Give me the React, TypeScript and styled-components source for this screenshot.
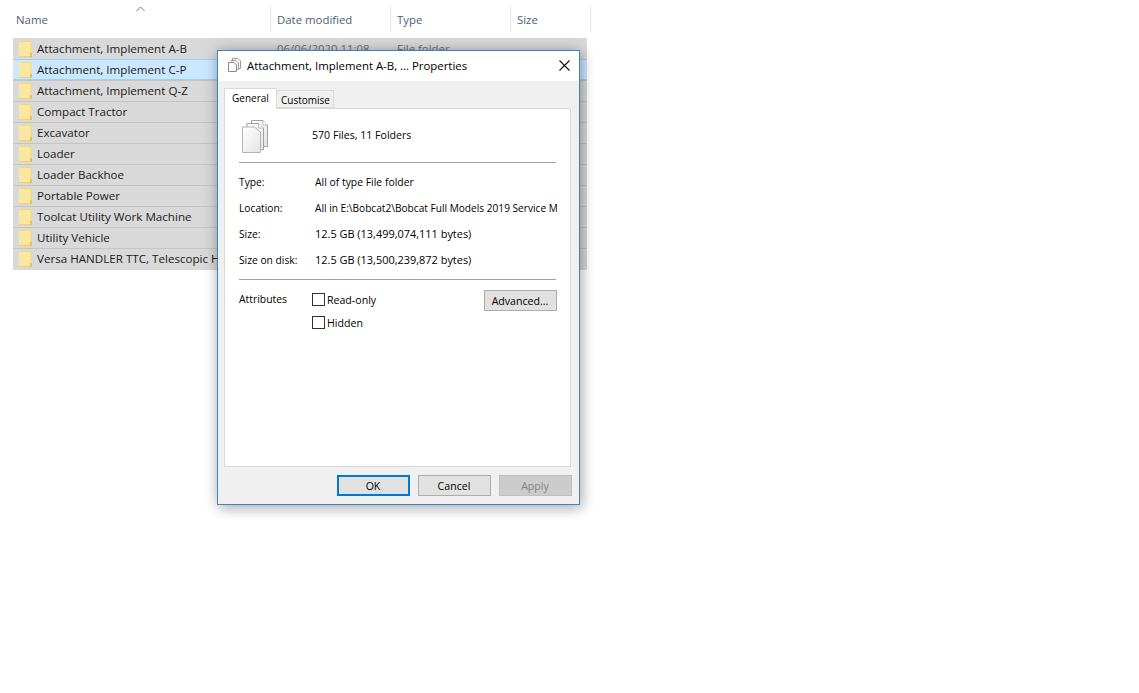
import React, { FC } from 'react';
import styled, { createGlobalStyle } from 'styled-components';

const GlobalStyle = createGlobalStyle`
  html, body {
    margin: 0;
    padding: 0;
    background: #ffffff;
    font-family: "Open Sans", "Noto Sans", sans-serif;
    color: #000000;
  }
  body {
    min-height: 693px;
    overflow: hidden;
  }
`;

const Page = styled.div`
  position: relative;
  width: 1139px;
  height: 693px;
  background: #ffffff;
  overflow: hidden;
`;

const Explorer = styled.div`
  display: flex;
  flex-direction: column;
  padding: 7px 0 0 13px;
`;

const HeaderRow = styled.div`
  display: flex;
  height: 25px;
  margin-bottom: 6px;
`;

const HeaderCell = styled.div<{ $width: number; $indent?: number }>`
  position: relative;
  box-sizing: border-box;
  width: ${(p) => p.$width}px;
  padding-left: ${(p) => p.$indent ?? 6}px;
  border-right: 1px solid #e5e5e5;
  font-size: 11.4px;
  line-height: 25px;
  color: #4c607a;
`;

const SortArrow = styled.svg`
  position: absolute;
  left: 123px;
  top: -1px;
`;

const List = styled.div`
  display: flex;
  flex-direction: column;
  width: 574px;
  padding-bottom: 1px;
  background: #d9d9d9;
`;

const FileRow = styled.div<{ $selected?: boolean }>`
  box-sizing: border-box;
  display: flex;
  align-items: center;
  height: 21px;
  padding-left: 6px;
  background: ${(p) => (p.$selected ? '#cce8ff' : '#d9d9d9')};
  border: 1px solid ${(p) => (p.$selected ? '#99d1ff' : '#d9d9d9')};
  border-width: 1px 0;
  border-top-color: ${(p) => (p.$selected ? '#99d1ff' : '#c4c4c4')};
  &:first-child {
    border-top-color: #d9d9d9;
  }
`;

const FolderIcon = styled.svg`
  flex: none;
  margin-right: 5px;
`;

const NameCell = styled.span`
  flex: none;
  width: 240px;
  font-size: 11.62px;
  line-height: 19px;
  color: #1a1a1a;
  white-space: nowrap;
`;

const MetaCell = styled.span<{ $width: number }>`
  flex: none;
  width: ${(p) => p.$width}px;
  font-size: 11.4px;
  line-height: 19px;
  color: #6d6d6d;
  white-space: nowrap;
`;

const Dialog = styled.div`
  position: absolute;
  left: 217px;
  top: 50px;
  box-sizing: border-box;
  width: 363px;
  height: 455px;
  display: flex;
  flex-direction: column;
  background: #f0f0f0;
  border: 1px solid #3b86bd;
  box-shadow: 0 0 14px rgba(0, 0, 0, 0.24), 3px 5px 12px rgba(0, 0, 0, 0.16);
`;

const TitleBar = styled.div`
  flex: none;
  display: flex;
  align-items: center;
  box-sizing: border-box;
  height: 30px;
  padding: 0 0 2px 10px;
  background: #ffffff;
`;

const TitleText = styled.span`
  flex: 1;
  margin-left: 6px;
  font-size: 11.4px;
  color: #000000;
  white-space: nowrap;
`;

const CloseButton = styled.div`
  flex: none;
  display: flex;
  align-items: center;
  justify-content: center;
  width: 29px;
  height: 28px;
`;

const TabBar = styled.div`
  flex: none;
  display: flex;
  align-items: flex-end;
  height: 27px;
  padding-left: 6px;
`;

const Tab = styled.div<{ $active?: boolean }>`
  position: relative;
  box-sizing: border-box;
  width: ${(p) => (p.$active ? 53 : 57)}px;
  height: ${(p) => (p.$active ? 21 : 18)}px;
  margin-bottom: ${(p) => (p.$active ? -1 : 0)}px;
  padding-left: ${(p) => (p.$active ? 7 : 4)}px;
  background: ${(p) => (p.$active ? '#ffffff' : '#f0f0f0')};
  border: 1px solid #d9d9d9;
  border-bottom: ${(p) => (p.$active ? 'none' : '1px solid #d9d9d9')};
  border-left-width: ${(p) => (p.$active ? 1 : 0)}px;
  font-size: 10px;
  line-height: 18px;
  z-index: ${(p) => (p.$active ? 1 : 0)};
  white-space: nowrap;
`;

const Panel = styled.div`
  flex: none;
  box-sizing: border-box;
  width: 347px;
  height: 359px;
  margin-left: 6px;
  padding: 0 13px 0 14px;
  background: #ffffff;
  border: 1px solid #d9d9d9;
`;

const SummaryRow = styled.div`
  display: flex;
  align-items: center;
  height: 53px;
`;

const SummaryIcon = styled.svg`
  flex: none;
  margin: 2px 0 0 2px;
`;

const SummaryText = styled.span`
  margin-left: 43px;
  margin-top: -1px;
  font-size: 10.6px;
  white-space: nowrap;
`;

const Divider = styled.div`
  height: 1px;
  background: #a0a0a0;
  width: 317px;
`;

const InfoList = styled.div`
  display: flex;
  flex-direction: column;
  height: 116px;
  padding-top: 6px;
  box-sizing: border-box;
`;

const InfoRow = styled.div`
  display: flex;
  align-items: baseline;
  height: 26px;
  line-height: 26px;
  white-space: nowrap;
`;

const InfoLabel = styled.span`
  flex: none;
  width: 76px;
  font-size: 10.25px;
`;

const InfoValue = styled.span<{ $size: number }>`
  display: block;
  width: 243px;
  overflow: hidden;
  font-size: ${(p) => p.$size}px;
`;

const AttributesRow = styled.div`
  display: flex;
  align-items: flex-start;
  padding-top: 10px;
`;

const AttributesLabel = styled.span`
  flex: none;
  width: 73px;
  font-size: 10.4px;
  line-height: 19px;
`;

const CheckGroup = styled.div`
  flex: 1;
  display: flex;
  flex-direction: column;
  gap: 10px;
  padding-top: 3px;
`;

const CheckRow = styled.div`
  display: flex;
  align-items: center;
  height: 13px;
  font-size: 10.6px;
`;

const CheckBox = styled.span`
  flex: none;
  box-sizing: border-box;
  width: 13px;
  height: 13px;
  margin-right: 2px;
  background: #ffffff;
  border: 1px solid #333333;
`;

const Button = styled.div<{ $kind?: 'default' | 'disabled' }>`
  box-sizing: border-box;
  display: flex;
  align-items: center;
  justify-content: center;
  width: 73px;
  height: 21px;
  padding-right: 1px;
  background: ${(p) => (p.$kind === 'disabled' ? '#cccccc' : '#e1e1e1')};
  border: ${(p) => (p.$kind === 'default' ? '2px solid #0078d7' : p.$kind === 'disabled' ? '1px solid #bfbfbf' : '1px solid #adadad')};
  color: ${(p) => (p.$kind === 'disabled' ? '#838383' : '#000000')};
  font-size: 10.6px;
  white-space: nowrap;
`;

const ButtonBar = styled.div`
  flex: none;
  display: flex;
  justify-content: flex-end;
  gap: 8px;
  padding: 8px 7px 0 0;
`;

const Folder: FC = () => (
  <FolderIcon width="13" height="16" viewBox="0 0 13 16">
    <path d="M1 0 H12 V12 H13 V16 H1 Q0 16 0 15 V1 Q0 0 1 0 Z" fill="#fbe8a0" />
    <path d="M1 0 H12.5 V12 H11.5 V1 H1 Z" fill="#f6d777" />
    <rect x="11" y="12" width="2" height="4" fill="#e8bf55" />
    <rect x="0" y="15" width="11" height="1" fill="#f1cf6d" />
  </FolderIcon>
);

const rows = [
  'Attachment, Implement A-B',
  'Attachment, Implement C-P',
  'Attachment, Implement Q-Z',
  'Compact Tractor',
  'Excavator',
  'Loader',
  'Loader Backhoe',
  'Portable Power',
  'Toolcat Utility Work Machine',
  'Utility Vehicle',
  'Versa HANDLER TTC, Telescopic Handlers',
];

const info: [string, string, number][] = [
  ['Type:', 'All of type File folder', 10.4],
  ['Location:', 'All in E:\\Bobcat2\\Bobcat Full Models 2019 Service Manual', 10.15],
  ['Size:', '12.5 GB (13,499,074,111 bytes)', 10.95],
  ['Size on disk:', '12.5 GB (13,500,239,872 bytes)', 10.95],
];

const App: FC = () => (
  <Page>
    <GlobalStyle />
    <Explorer>
      <HeaderRow>
        <HeaderCell $width={258} $indent={3}>
          Name
          <SortArrow width="9" height="6" viewBox="0 0 9 6">
            <path d="M0.5 5 L4.5 1 L8.5 5" fill="none" stroke="#7a7a7a" strokeWidth="1" />
          </SortArrow>
        </HeaderCell>
        <HeaderCell $width={120}>Date modified</HeaderCell>
        <HeaderCell $width={120}>Type</HeaderCell>
        <HeaderCell $width={80}>Size</HeaderCell>
      </HeaderRow>
      <List>
        {rows.map((name, i) => (
          <FileRow key={name} $selected={i === 1}>
            <Folder />
            <NameCell>{name}</NameCell>
            <MetaCell $width={120}>06/06/2020 11:08</MetaCell>
            <MetaCell $width={100}>File folder</MetaCell>
          </FileRow>
        ))}
      </List>
    </Explorer>
    <Dialog>
      <TitleBar>
        <svg width="13" height="14" viewBox="0 0 13 14">
          <path d="M4.5 2.5 V0.5 H10 L12.5 3 V10.5 H10.5" fill="none" stroke="#9a9a9a" />
          <path d="M3 3.5 V2.5 H8 L10.5 5 V11.5 H9" fill="#fff" stroke="#9a9a9a" />
          <path d="M0.5 4.5 H6 L8.5 7 V13.5 H0.5 Z" fill="#fff" stroke="#8a8a8a" />
        </svg>
        <TitleText>Attachment, Implement A-B, ... Properties</TitleText>
        <CloseButton>
          <svg width="11" height="11" viewBox="0 0 11 11">
            <path d="M0.5 0.5 L10.5 10.5 M10.5 0.5 L0.5 10.5" stroke="#111" strokeWidth="1.1" />
          </svg>
        </CloseButton>
      </TitleBar>
      <TabBar>
        <Tab $active>General</Tab>
        <Tab>Customise</Tab>
      </TabBar>
      <Panel>
        <SummaryRow>
          <SummaryIcon width="28" height="33" viewBox="0 0 28 33">
            <defs>
              <linearGradient id="sheet" x1="0" y1="0" x2="1" y2="1">
                <stop offset="0" stopColor="#ffffff" />
                <stop offset="1" stopColor="#e4e4e4" />
              </linearGradient>
            </defs>
            <path d="M10.5 5 V0.5 H22 L26.5 5 V26.5 H22" fill="url(#sheet)" stroke="#a3a3a3" />
            <path d="M22 0.5 V5 H26.5" fill="#fff" stroke="#bdbdbd" />
            <path d="M6 7 V3.5 H17.5 L22.5 8 V29.5 H19" fill="url(#sheet)" stroke="#a3a3a3" />
            <path d="M17.5 3.5 V8 H22.5" fill="#fff" stroke="#bdbdbd" />
            <path d="M1.5 7 H13.5 L19.5 12 V32.5 H1.5 Z" fill="url(#sheet)" stroke="#b4b4b4" />
          </SummaryIcon>
          <SummaryText>570 Files, 11 Folders</SummaryText>
        </SummaryRow>
        <Divider />
        <InfoList>
          {info.map(([label, value, size]) => (
            <InfoRow key={label}>
              <InfoLabel>{label}</InfoLabel>
              <InfoValue $size={size}>{value}</InfoValue>
            </InfoRow>
          ))}
        </InfoList>
        <Divider />
        <AttributesRow>
          <AttributesLabel>Attributes</AttributesLabel>
          <CheckGroup>
            <CheckRow>
              <CheckBox />
              Read-only
            </CheckRow>
            <CheckRow>
              <CheckBox />
              Hidden
            </CheckRow>
          </CheckGroup>
          <Button>Advanced...</Button>
        </AttributesRow>
      </Panel>
      <ButtonBar>
        <Button $kind="default">OK</Button>
        <Button>Cancel</Button>
        <Button $kind="disabled">Apply</Button>
      </ButtonBar>
    </Dialog>
  </Page>
);

export default App;
